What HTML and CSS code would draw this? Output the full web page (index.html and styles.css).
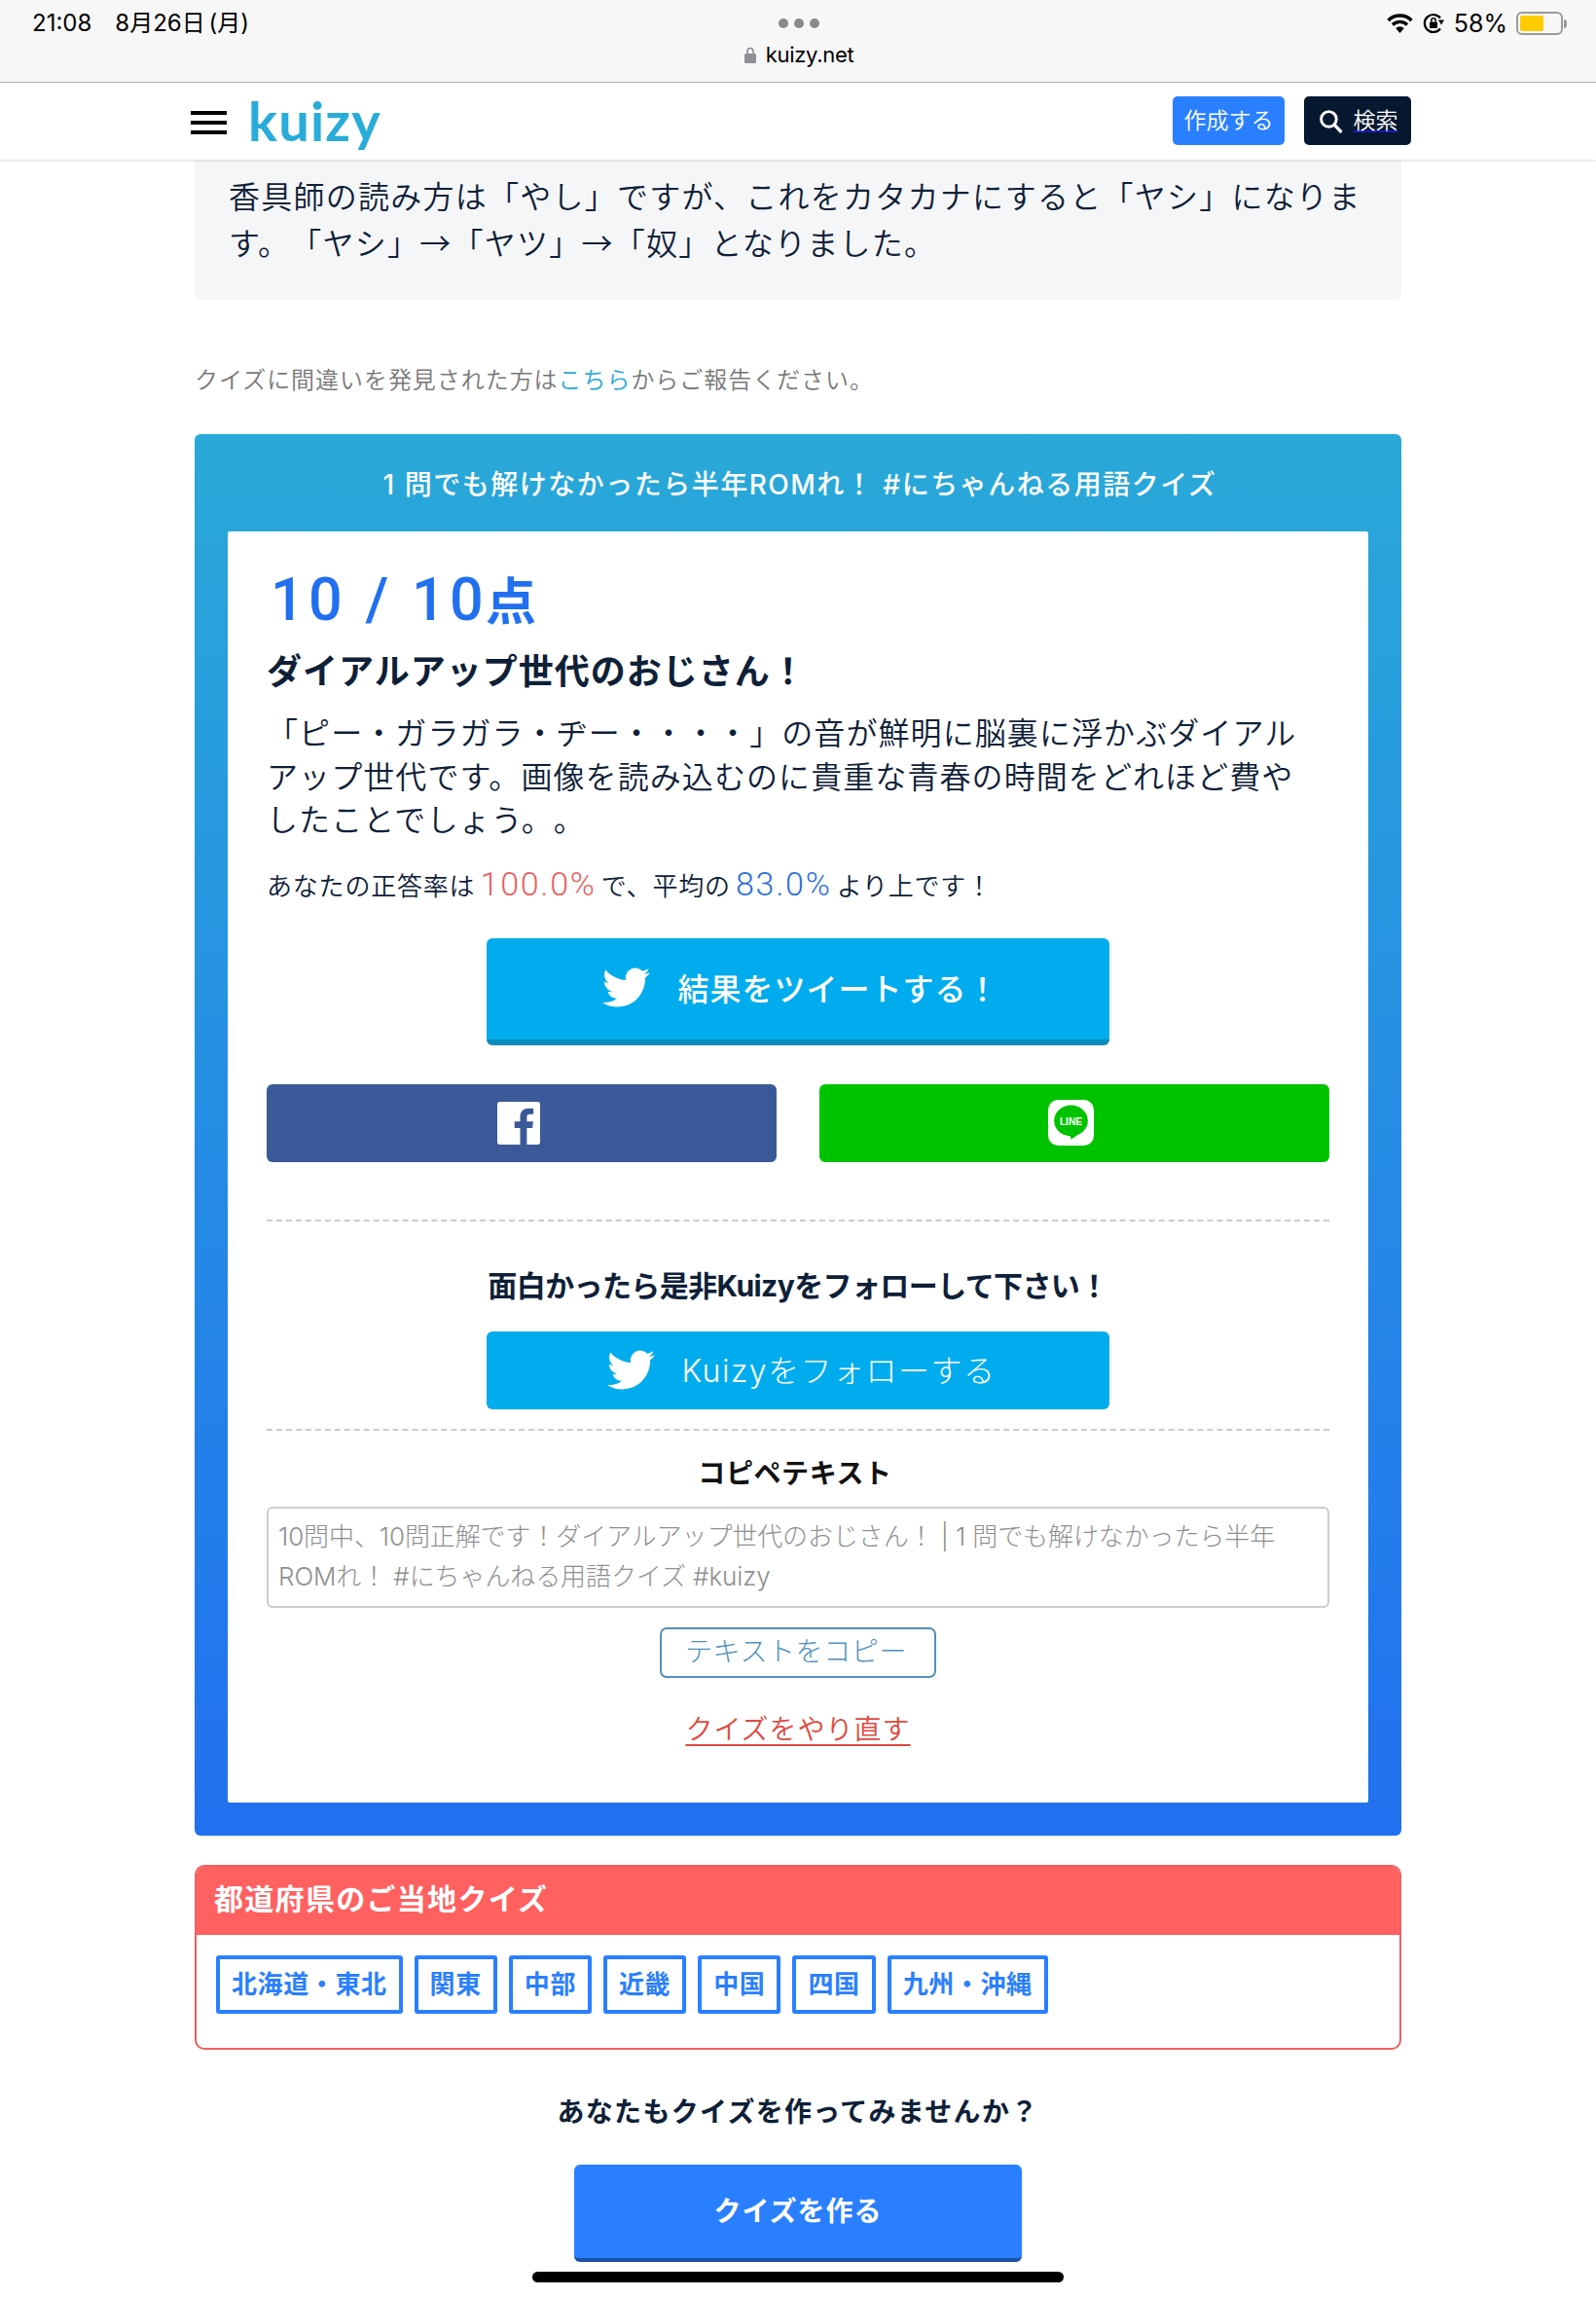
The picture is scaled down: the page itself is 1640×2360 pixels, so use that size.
FILE: index.html
```html
<!DOCTYPE html>
<html lang="ja">
<head>
<meta charset="utf-8">
<title>kuizy</title>
<link rel="stylesheet" href="styles.css">
</head>
<body>
<header class="status">
  <div class="status-left"><span>21:08</span><span class="date">8月26日 (月)</span></div>
  <div class="status-mid">
    <div class="dots"><i></i><i></i><i></i></div>
    <div class="url">
      <svg class="lock" viewBox="0 0 12 17"><path d="M3 7V4.500a3 3 0 0 1 6 0V7" fill="none" stroke="#8e8e93" stroke-width="1.600"/><rect y="7" width="12" height="10" rx="1.500" fill="#8e8e93"/></svg>
      <span>kuizy.net</span>
    </div>
  </div>
  <div class="status-right">
    <svg class="wifi" viewBox="0 0 26 20"><path d="M1 7a17 17 0 0 1 24 0" fill="none" stroke="#000" stroke-width="3.400"/><path d="M5.500 11.500a10.600 10.600 0 0 1 15 0" fill="none" stroke="#000" stroke-width="3.400"/><path d="M13 20l-4.300-5a6 6 0 0 1 8.600 0z" fill="#000"/></svg>
    <svg class="rot" viewBox="0 0 22 24"><path d="M18 17.500A9 9 0 1 1 18 6.500" fill="none" stroke="#000" stroke-width="2.200"/><path d="M16 8.500h6l-3 5z" fill="#000"/><rect x="7" y="10.500" width="8" height="6.500" rx="1" fill="#000"/><path d="M8.800 10.500V9a2.200 2.200 0 0 1 4.400 0v1.500" fill="none" stroke="#000" stroke-width="1.500"/></svg>
    <span class="pct">58%</span>
    <div class="battery"><div class="battery-fill"></div></div>
    <div class="battery-nub"></div>
  </div>
</header>

<nav class="nav">
  <div class="burger"><i></i><i></i><i></i></div>
  <a class="logo">kuizy</a>
  <div class="nav-space"></div>
  <a class="btn-create"><span>作成する</span></a>
  <a class="btn-search">
    <svg viewBox="0 0 24 24"><circle cx="10" cy="10" r="7.500" fill="none" stroke="#fff" stroke-width="2.800"/><path d="M15.500 15.500L22.500 23" stroke="#fff" stroke-width="3.200"/></svg>
    <span class="search-label">検索</span>
  </a>
</nav>

<main class="main">
  <section class="explain">
    <p>香具師の読み方は「やし」ですが、これをカタカナにすると「ヤシ」になります。「ヤシ」→「ヤツ」→「奴」となりました。</p>
  </section>

  <p class="report">クイズに間違いを発見された方は<a>こちら</a>からご報告ください。</p>

  <section class="result">
    <h2 class="result-title">1 問でも解けなかったら半年ROMれ！ #にちゃんねる用語クイズ</h2>
    <div class="result-body">
      <div class="score"><span>10 / 10</span><span class="score-unit">点</span></div>
      <h3 class="rank">ダイアルアップ世代のおじさん！</h3>
      <p class="desc">「ピー・ガラガラ・ヂー・・・・」の音が鮮明に脳裏に浮かぶダイアルアップ世代です。画像を読み込むのに貴重な青春の時間をどれほど費やしたことでしょう。。</p>
      <p class="rate">あなたの正答率は <span class="num-red">100.0%</span> で、平均の <span class="num-blue">83.0%</span> より上です！</p>

      <a class="btn-tweet">
        <svg class="tw" viewBox="0 0 24 24"><path d="M23.953 4.570a10 10 0 0 1-2.825.775 4.958 4.958 0 0 0 2.163-2.723c-.951.555-2.005.959-3.127 1.184a4.920 4.920 0 0 0-8.384 4.482C7.690 8.095 4.067 6.130 1.640 3.162a4.822 4.822 0 0 0-.666 2.475c0 1.710.870 3.213 2.188 4.096a4.904 4.904 0 0 1-2.228-.616v.060a4.923 4.923 0 0 0 3.946 4.827 4.996 4.996 0 0 1-2.212.085 4.936 4.936 0 0 0 4.604 3.417 9.867 9.867 0 0 1-6.102 2.105c-.390 0-.779-.023-1.170-.067a13.995 13.995 0 0 0 7.557 2.209c9.053 0 13.998-7.496 13.998-13.985 0-.210 0-.420-.015-.630A9.935 9.935 0 0 0 24 4.590z" fill="#fff"/></svg>
        <span>結果をツイートする！</span>
      </a>

      <div class="share">
        <a class="share-fb">
          <svg viewBox="0 0 24 24"><path d="M22.675 0H1.325C.593 0 0 .593 0 1.325v21.351C0 23.407.593 24 1.325 24H12.820v-9.294H9.692v-3.622h3.128V8.413c0-3.100 1.893-4.788 4.659-4.788 1.325 0 2.463.099 2.795.143v3.240l-1.918.001c-1.504 0-1.795.715-1.795 1.763v2.313h3.587l-.467 3.622h-3.120V24h6.116c.730 0 1.323-.593 1.323-1.325V1.325C24 .593 23.407 0 22.675 0z" fill="#fff"/></svg>
        </a>
        <a class="share-line">
          <svg viewBox="0 0 46 46"><rect width="46" height="46" rx="10" fill="#fff"/><ellipse cx="23" cy="21" rx="17" ry="15.500" fill="#00c300"/><path d="M19 34c3 1 4 3 4 6 3-2 6-4 8-6z" fill="#00c300"/><text x="23" y="25" class="line-text" text-anchor="middle">LINE</text></svg>
        </a>
      </div>

      <div class="sep sep-a"></div>
      <h4 class="follow-head">面白かったら是非Kuizyをフォローして下さい！</h4>
      <a class="btn-follow">
        <svg class="tw" viewBox="0 0 24 24"><path d="M23.953 4.570a10 10 0 0 1-2.825.775 4.958 4.958 0 0 0 2.163-2.723c-.951.555-2.005.959-3.127 1.184a4.920 4.920 0 0 0-8.384 4.482C7.690 8.095 4.067 6.130 1.640 3.162a4.822 4.822 0 0 0-.666 2.475c0 1.710.870 3.213 2.188 4.096a4.904 4.904 0 0 1-2.228-.616v.060a4.923 4.923 0 0 0 3.946 4.827 4.996 4.996 0 0 1-2.212.085 4.936 4.936 0 0 0 4.604 3.417 9.867 9.867 0 0 1-6.102 2.105c-.390 0-.779-.023-1.170-.067a13.995 13.995 0 0 0 7.557 2.209c9.053 0 13.998-7.496 13.998-13.985 0-.210 0-.420-.015-.630A9.935 9.935 0 0 0 24 4.590z" fill="#fff"/></svg>
        <span>Kuizyをフォローする</span>
      </a>
      <div class="sep sep-b"></div>
      <h4 class="copy-head">コピペテキスト</h4>
      <textarea class="copy-text" readonly>10問中、10問正解です！ダイアルアップ世代のおじさん！ | 1 問でも解けなかったら半年ROMれ！ #にちゃんねる用語クイズ #kuizy
https://kuizy.net/quiz/</textarea>
      <a class="btn-copy">テキストをコピー</a>
      <a class="retry">クイズをやり直す</a>
    </div>
  </section>

  <section class="pref">
    <h3 class="pref-head">都道府県のご当地クイズ</h3>
    <div class="pref-tags">
      <a class="tag">北海道・東北</a>
      <a class="tag">関東</a>
      <a class="tag">中部</a>
      <a class="tag">近畿</a>
      <a class="tag">中国</a>
      <a class="tag">四国</a>
      <a class="tag">九州・沖縄</a>
    </div>
  </section>

  <p class="ask">あなたもクイズを作ってみませんか？</p>
  <a class="btn-make">クイズを作る</a>
</main>
<div class="home-bar"></div>
</body>
</html>
```
FILE: styles.css
```css
* { box-sizing: border-box; text-spacing-trim: space-all; }
html, body { margin: 0; padding: 0; }
body {
  width: 1640px;
  height: 2360px;
  overflow: hidden;
  position: relative;
  background: #fff;
  color: #0e2038;
  font-family: Inter, "Noto Sans CJK JP", sans-serif;
}
p, h2, h3, h4 { margin: 0; }
a { display: block; }

.status {
  height: 85px;
  background: #f7f7f7;
  border-bottom: 1px solid #b4b4b4;
  position: relative;
  display: flex;
  justify-content: space-between;
  color: #000;
}
.status-left {
  display: flex;
  gap: 24px;
  padding: 8px 0 0 33px;
  font-size: 24px;
  line-height: 32px;
  height: 40px;
}
.date { word-spacing: -3px; }
.status-mid {
  position: absolute;
  left: 2px;
  right: 0;
  top: 19px;
  display: flex;
  flex-direction: column;
  align-items: center;
}
.dots { display: flex; gap: 6px; height: 10px; }
.dots i { width: 10px; height: 10px; border-radius: 50%; background: #8a8a8a; }
.url { display: flex; align-items: center; gap: 10px; margin-top: 11px; font-size: 22px; letter-spacing: -.3px; line-height: 32px; }
.lock { width: 12px; height: 17px; }
.status-right { display: flex; align-items: center; height: 48px; padding-right: 30px; }
.wifi { width: 27px; height: 20px; margin-right: 10px; }
.rot { width: 22px; height: 24px; margin-right: 10px; }
.pct { font-size: 25px; margin-right: 9px; }
.battery { width: 48px; height: 24px; border: 2px solid #9a9a9a; border-radius: 6px; padding: 2px; }
.battery-fill { width: 24px; height: 100%; background: #ffcc00; border-radius: 2px; }
.battery-nub { width: 3px; height: 9px; background: #9a9a9a; border-radius: 0 3px 3px 0; margin-left: 1px; }

.nav {
  height: 79px;
  background: #fff;
  position: relative;
  z-index: 2;
  box-shadow: 0 1px 3px rgba(0, 0, 0, .14);
  display: flex;
  align-items: flex-start;
  padding: 14px 190px 0 196px;
}
.burger { width: 37px; height: 24px; margin-top: 15px; display: flex; flex-direction: column; justify-content: space-between; }
.burger i { height: 4px; background: #000; }
.logo { margin: -9px 0 0 22px; font-family: Lato, sans-serif; font-weight: 700; font-size: 56px; line-height: 68px; color: #29acd9; letter-spacing: 1.200px; }
.nav-space { flex: 1; }
.btn-create, .btn-search {
  height: 50px;
  border-radius: 5px;
  color: #fff;
  font-size: 23px;
  font-weight: 350;
  display: flex;
  align-items: center;
  justify-content: center;
}
.btn-create { width: 115px; background: #2a7fff; padding-bottom: 5px; }
.btn-search { width: 110px; margin-left: 20px; background: #06182f; gap: 11px; }
.btn-search svg { width: 25px; height: 25px; margin-left: 1px; }
.search-label { margin-top: -5px; text-decoration: underline; text-decoration-color: #1a1ac0; }

.main { width: 1240px; margin: 0 auto; }
.explain {
  height: 144px;
  background: #f5f6f7;
  border-radius: 0 0 6px 6px;
  padding: 12px 35px 0;
  font-family: "Noto Sans CJK JP", sans-serif;
  font-size: 32px;
  line-height: 48px;
  letter-spacing: 1.250px;
  font-weight: 350;
}
.report { margin-top: 66px; font-size: 24px; line-height: 34px; letter-spacing: .95px; color: #777; font-weight: 350; }
.report a { display: inline; color: #29a9d8; }

.result {
  margin-top: 38px;
  height: 1440px;
  background: linear-gradient(#29a9d8, #2170f0);
  border-radius: 6px;
  padding: 0 34px;
}
.result-title { height: 100px; padding-left: 4px; line-height: 104px; text-align: center; color: #fff; font-size: 28px; font-weight: 500; letter-spacing: 1.500px; }
.result-body {
  height: 1306px;
  background: #fff;
  border-radius: 2px;
  padding: 34px 40px 0;
  display: flex;
  flex-direction: column;
}
.score { display: flex; align-items: baseline; height: 72px; font-family: Roboto, sans-serif; font-size: 61px; line-height: 70px; font-weight: 500; letter-spacing: 4.300px; color: #2170f0; padding-left: 4px; white-space: pre; }
.score-unit { margin-left: -2px; font-family: "Noto Sans CJK JP", sans-serif; font-size: 52px; font-weight: 700; letter-spacing: 0; }
.rank { margin-top: 13px; font-size: 36px; line-height: 50px; font-weight: 700; letter-spacing: 1px; }
.desc { margin-top: 17px; padding-right: 24px; font-size: 32px; line-height: 44.500px; letter-spacing: 1.080px; font-weight: 350; }
.rate { margin-top: 20px; font-size: 26px; line-height: 44px; font-weight: 350; letter-spacing: .8px; word-spacing: -3px; }
.num-red, .num-blue { font-family: Roboto, sans-serif; font-size: 34px; font-weight: 300; letter-spacing: 1.750px; }
.num-red { color: #e96060; }
.num-blue { color: #2e6fd8; }

.btn-tweet {
  width: 640px;
  height: 110px;
  margin: 31px auto 0;
  padding: 4px 0 0 6px;
  background: #00aced;
  border-bottom: 6px solid #0a8cbf;
  border-radius: 6px;
  color: #fff;
  font-size: 32px;
  font-weight: 500;
  letter-spacing: 1px;
  display: flex;
  align-items: flex-start;
  justify-content: center;
  gap: 28px;
}
.btn-tweet .tw { width: 49px; height: 49px; margin-top: 22px; }
.btn-tweet span { line-height: 46px; margin-top: 26px; }
.share { display: grid; grid-template-columns: 524px 524px; column-gap: 44px; margin-top: 40px; }
.share-fb, .share-line { height: 80px; border-radius: 6px; display: flex; align-items: center; justify-content: center; }
.share-fb { background: #3b5998; }
.share-fb svg { width: 44px; height: 44px; margin-right: 6px; }
.share-line { background: #00c300; }
.share-line svg { width: 47px; height: 47px; margin-right: 8px; }
.line-text { font-family: "Liberation Sans", sans-serif; font-size: 10px; font-weight: 700; fill: #fff; }

.sep { border-top: 2px dashed #ccc; }
.sep-a { margin-top: 59px; }
.follow-head { margin-top: 44px; text-align: center; font-size: 30px; line-height: 44px; font-weight: 700; letter-spacing: -.6px; }
.btn-follow {
  width: 640px;
  height: 80px;
  margin: 25px auto 0;
  padding-left: 8px;
  background: #00aced;
  border-radius: 6px;
  color: #fff;
  font-size: 32px;
  font-weight: 300;
  letter-spacing: 1.500px;
  display: flex;
  align-items: center;
  justify-content: center;
  gap: 27px;
}
.btn-follow .tw { width: 49px; height: 49px; }
.btn-follow span { margin-top: -3px; }
.sep-b { margin-top: 20px; }
.copy-head { margin-top: 24px; padding-right: 6px; text-align: center; font-size: 28px; line-height: 40px; font-weight: 700; letter-spacing: .6px; color: #111; }
.copy-text {
  display: block;
  width: 100%;
  height: 104px;
  margin-top: 14px;
  padding: 8px 10px 0 10px;
  border: 2px solid #ccc;
  border-radius: 6px;
  resize: none;
  overflow: hidden;
  outline: none;
  font: 300 26px/41px Inter, "Noto Sans CJK JP", sans-serif;
  letter-spacing: -.1px;
  color: #8f8f8f;
}
.btn-copy {
  width: 284px;
  height: 52px;
  margin: 20px auto 0;
  padding-right: 4px;
  border: 2px solid #5090bd;
  border-radius: 7px;
  color: #5090bd;
  font-size: 28px;
  font-weight: 300;
  line-height: 46px;
  letter-spacing: .6px;
  text-align: center;
}
.retry {
  margin: 32px auto 0;
  color: #e04a3f;
  font-size: 28px;
  line-height: 42px;
  font-weight: 350;
  text-decoration: underline;
  text-underline-offset: 5px;
  letter-spacing: 1px;
}

.pref { margin-top: 30px; height: 190px; border: 2px solid #f06060; border-radius: 10px; overflow: hidden; }
.pref-head { margin: -2px -2px 0; height: 72px; padding-left: 20px; background: #ff6060; color: #fff; font-size: 30px; line-height: 70px; font-weight: 600; letter-spacing: 1.300px; }
.pref-tags { display: flex; gap: 12px; padding: 21px 0 0 20px; }
.tag {
  height: 60px;
  padding: 0 12px;
  border: 4px solid #2a7fff;
  border-radius: 3px;
  color: #2a7fff;
  font-size: 26px;
  font-weight: 700;
  line-height: 52px;
  letter-spacing: .6px;
}

.ask { margin-top: 43px; text-align: center; font-size: 28px; line-height: 42px; font-weight: 700; letter-spacing: 1.300px; }
.btn-make {
  width: 460px;
  height: 100px;
  margin: 33px auto 0;
  background: #2a7fff;
  border-bottom: 4px solid #1a50a8;
  border-radius: 6px;
  color: #fff;
  font-size: 28px;
  font-weight: 700;
  line-height: 96px;
  letter-spacing: 1px;
  text-align: center;
}
.home-bar { position: absolute; left: 547px; top: 2334px; width: 546px; height: 11px; background: #000; border-radius: 6px; }
```
